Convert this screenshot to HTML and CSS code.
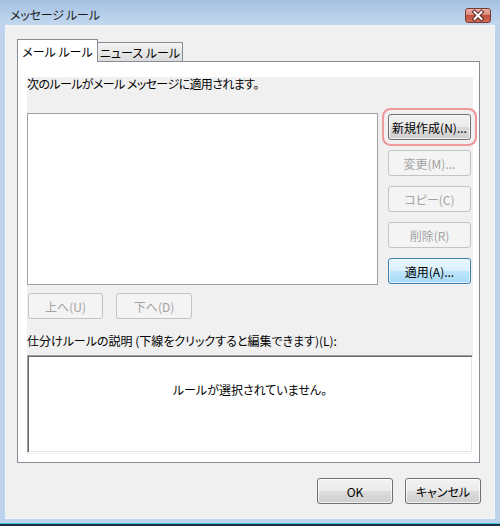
FILE: index.html
```html
<!DOCTYPE html>
<html lang="ja">
<head>
<meta charset="utf-8">
<link rel="stylesheet" href="styles.css">
</head>
<body>
<div class="window">
  <div class="titlebar">
    <span class="title">メッセージ ルール</span>
    <div class="close">
      <svg width="24" height="13" viewBox="0 0 24 13">
        <path d="M8.5 3 L15.5 10 M15.5 3 L8.5 10" stroke="#5a2a26" stroke-width="4" stroke-linecap="square" fill="none"/>
        <path d="M8.5 3 L15.5 10 M15.5 3 L8.5 10" stroke="#ffffff" stroke-width="2" stroke-linecap="square" fill="none"/>
      </svg>
    </div>
  </div>
  <div class="client">
    <div class="tabctl">
      <div class="tabs">
        <div class="tab active">メール ルール</div>
        <div class="tab inactive">ニュース ルール</div>
      </div>
      <div class="panel">
        <div class="content">
          <div class="line heading">次のルールがメール メッセージに適用されます。</div>
          <div class="mid">
            <div class="listbox"></div>
            <div class="btncol">
              <div class="btn focus">新規作成(N)...</div>
              <div class="btn disabled">変更(M)...</div>
              <div class="btn disabled">コピー(C)</div>
              <div class="btn disabled">削除(R)</div>
              <div class="btn default">適用(A)...</div>
            </div>
          </div>
          <div class="moverow">
            <div class="btn disabled up">上へ(U)</div>
            <div class="btn disabled down">下へ(D)</div>
          </div>
          <div class="line label">仕分けルールの説明 (下線をクリックすると編集できます)(L):</div>
          <div class="desc">ルールが選択されていません。</div>
        </div>
      </div>
    </div>
    <div class="dlgbtns">
      <div class="btn dlg">OK</div>
      <div class="btn dlg">キャンセル</div>
    </div>
  </div>
</div>
</body>
</html>
```

FILE: styles.css
```css
body {
  margin: 0;
  background: #ffffff;
  font-family: "Noto Sans CJK JP", sans-serif;
  font-size: 12px;
  font-feature-settings: "palt";
  color: #000;
}

.window {
  width: 500px;
  height: 526px;
  box-sizing: border-box;
  background: #bcd3eb;
  border-bottom: 2px solid #1f2f3c;
  box-shadow: inset 0 -1px 0 #3cc4ec;
  display: flex;
  flex-direction: column;
}

.titlebar {
  height: 25px;
  flex: none;
  background: linear-gradient(#a3c0e2, #c3d8ef);
  display: flex;
  align-items: flex-start;
  padding-left: 10px;
}

.title {
  margin-top: 6px;
  line-height: 18px;
  color: #1a1a1a;
  letter-spacing: -0.2px;
}

.close {
  margin-left: auto;
  margin-right: 9px;
  margin-top: 8px;
  width: 26px;
  height: 15px;
  box-sizing: border-box;
  border: 1px solid #7d3a33;
  border-radius: 3px;
  background: linear-gradient(#eab0a4 0%, #d98a7c 45%, #c4503f 50%, #d06a56 100%);
  display: flex;
  align-items: center;
  justify-content: center;
}

.client {
  margin: 0 5px;
  height: 494px;
  box-sizing: border-box;
  border: 1px solid #f3f7fb;
  background: #f0f0f0;
  padding: 13px 14px 0 11px;
}

.tabs {
  display: flex;
  align-items: flex-end;
  height: 22px;
  position: relative;
  z-index: 1;
}

.tab {
  box-sizing: border-box;
  border: 1px solid #898c95;
  border-bottom: 0;
  display: flex;
  align-items: center;
  justify-content: center;
  white-space: nowrap;
}

.tab.active {
  width: 81px;
  height: 23px;
  margin-bottom: -1px;
  background: #fff;
  position: relative;
  z-index: 2;
}

.tab.inactive {
  width: 86px;
  height: 19px;
  margin-left: -1px;
  background: linear-gradient(#f3f3f3, #dcdcdc);
}

.panel {
  height: 402px;
  box-sizing: border-box;
  border: 1px solid #898c95;
  background: #fff;
  padding: 15px 6px 8px 9px;
}

.content {
  background: #f0f0f0;
  height: 100%;
  display: flex;
  flex-direction: column;
}

.line {
  height: 14px;
  line-height: 14px;
  white-space: nowrap;
}

.heading {
  margin-bottom: 22px;
  letter-spacing: -0.6px;
}

.mid {
  display: flex;
  height: 172px;
}

.listbox {
  width: 351px;
  height: 172px;
  box-sizing: border-box;
  border: 1px solid #a0a0a0;
  background: #fff;
}

.btncol {
  margin-left: 10px;
  padding-top: 1px;
  display: flex;
  flex-direction: column;
  gap: 10px;
}

.btn {
  box-sizing: border-box;
  height: 26px;
  width: 83px;
  border: 1px solid #707070;
  border-radius: 3px;
  background: linear-gradient(#f2f2f2 0%, #ebebeb 50%, #dddddd 50%, #cfcfcf 100%);
  box-shadow: inset 0 0 0 1px rgba(255, 255, 255, 0.7);
  display: flex;
  align-items: center;
  justify-content: center;
  white-space: nowrap;
}

.btn.disabled {
  border-color: #c2c5c7;
  background: #f4f4f4;
  color: #a3a3a3;
  box-shadow: none;
}

.btn.default {
  border-color: #3c7fb1;
  background: linear-gradient(#eaf6fd 0%, #d9f0fc 50%, #bee6fd 50%, #a7d9f5 100%);
  box-shadow: inset 0 0 0 1px rgba(255, 255, 255, 0.6);
}

.btn.focus {
  box-shadow: inset 0 0 0 1px rgba(255, 255, 255, 0.7), 0 0 0 4px #f0f0f0, 0 0 0 6px #f09a9e;
}

.moverow {
  margin-top: 8px;
  padding-left: 1px;
  display: flex;
  gap: 13px;
}

.btn.up {
  width: 75px;
}

.btn.down {
  width: 76px;
}

.label {
  margin-top: 15px;
}

.desc {
  margin-top: 7px;
  height: 98px;
  box-sizing: border-box;
  background: #fff;
  border-top: 1px solid #a0a0a0;
  border-left: 1px solid #a0a0a0;
  border-right: 1px solid #ffffff;
  border-bottom: 1px solid #ffffff;
  box-shadow: inset 1px 1px 0 #696969, inset -1px -1px 0 #e3e3e3;
  text-align: center;
  padding-top: 25px;
  line-height: 18px;
}

.dlgbtns {
  display: flex;
  justify-content: flex-end;
  gap: 12px;
  margin-top: 15px;
  margin-right: -1px;
}

.btn.dlg {
  width: 76px;
}
```
